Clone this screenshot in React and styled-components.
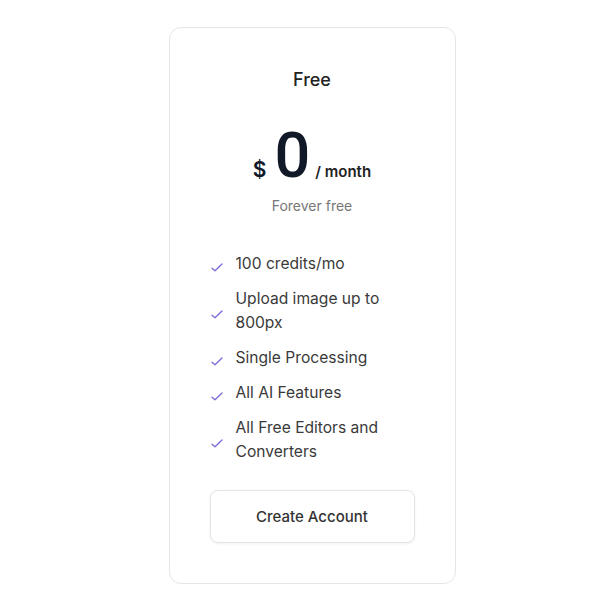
import React from "react";
import styled, { createGlobalStyle } from "styled-components";

const FEATURES = [
  "100 credits/mo",
  "Upload image up to 800px",
  "Single Processing",
  "All AI Features",
  "All Free Editors and Converters",
];

const GlobalStyle = createGlobalStyle`
  html, body {
    margin: 0;
    padding: 0;
    background: #ffffff;
  }
  body {
    font-family: Inter, "Noto Sans", sans-serif;
  }
`;

const Page = styled.div`
  width: 600px;
  height: 600px;
  display: flex;
  justify-content: center;
  padding-top: 27px;
  box-sizing: border-box;
  padding-left: 24px;
`;

const Card = styled.div`
  width: 287px;
  height: 557px;
  box-sizing: border-box;
  border: 1px solid #e6e6e6;
  border-radius: 12px;
  padding: 38px 40px 0;
  display: flex;
  flex-direction: column;
  align-items: center;
`;

const Title = styled.div`
  font-size: 18px;
  font-weight: 500;
  color: #222;
  line-height: 28px;
`;

const PriceRow = styled.div`
  display: flex;
  align-items: baseline;
  margin-top: 30px;
  color: #111827;
  line-height: 1;
`;

const Currency = styled.span`
  font-size: 21px;
  font-weight: 600;
  margin-right: 8px;
`;

const Amount = styled.span`
  font-family: Roboto, sans-serif;
  font-size: 63px;
  font-weight: 500;
  margin-right: 5px;
`;

const Period = styled.span`
  font-size: 15px;
  font-weight: 600;
  color: #222;
`;

const Note = styled.div`
  font-size: 14px;
  color: #777;
  margin-top: 10px;
`;

const List = styled.ul`
  list-style: none;
  margin: 38px 0 0;
  padding: 0;
  width: 100%;
  display: flex;
  flex-direction: column;
  gap: 11px;
`;

const Item = styled.li`
  display: flex;
  align-items: center;
  gap: 12px;
  font-size: 15.6px;
  line-height: 24px;
  color: #3a3a3a;
`;

const Check = styled.svg`
  flex: none;
  width: 14px;
  height: 14px;
  margin-top: 6px;
  color: #7b6fd6;
`;

const Button = styled.button`
  margin-top: 26px;
  width: 100%;
  height: 53px;
  border: 1px solid #e4e4e4;
  border-radius: 8px;
  background: #fff;
  box-shadow: 0 1px 3px rgba(0, 0, 0, 0.06);
  font-family: inherit;
  font-size: 15px;
  font-weight: 500;
  color: #333;
  cursor: pointer;
`;

const CheckIcon = () => (
  <Check viewBox="0 0 14 14" fill="none">
    <path d="M2 8.2 L5 10.8 L12 4" stroke="currentColor" strokeWidth="1.4" strokeLinecap="round" strokeLinejoin="round" />
  </Check>
);

const App = () => (
  <>
    <GlobalStyle />
    <Page>
      <Card>
        <Title>Free</Title>
        <PriceRow>
          <Currency>$</Currency>
          <Amount>0</Amount>
          <Period>/ month</Period>
        </PriceRow>
        <Note>Forever free</Note>
        <List>
          {FEATURES.map(f => (
            <Item key={f}>
              <CheckIcon />
              <span>{f}</span>
            </Item>
          ))}
        </List>
        <Button>Create Account</Button>
      </Card>
    </Page>
  </>
);

export default App;
